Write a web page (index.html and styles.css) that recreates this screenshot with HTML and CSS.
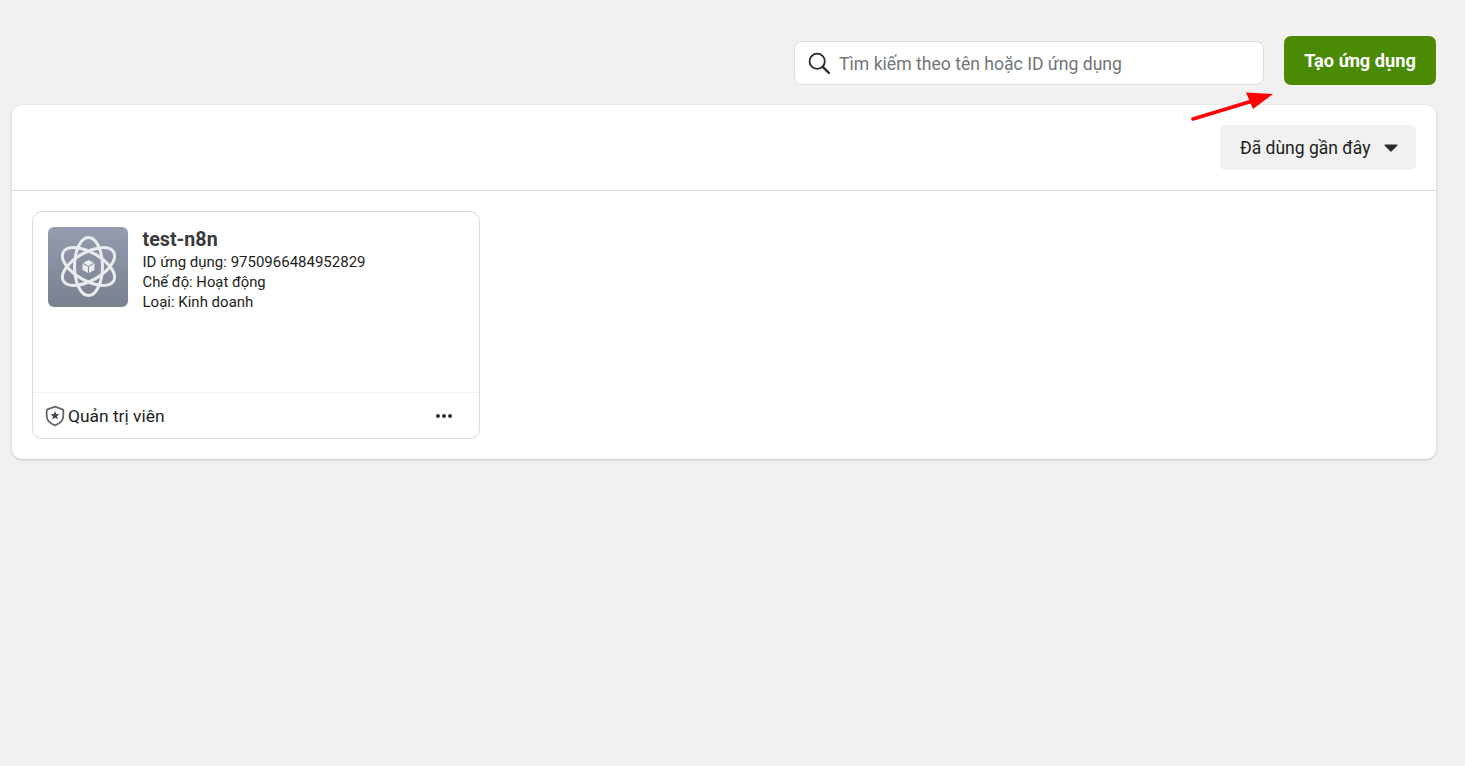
FILE: index.html
```html
<!DOCTYPE html>
<html lang="vi">
<head>
<meta charset="utf-8">
<title>Ứng dụng</title>
<link rel="stylesheet" href="styles.css">
</head>
<body>
<main class="page">
  <header class="topbar">
    <label class="search">
      <svg class="search-icon" viewBox="0 0 24 24" width="24" height="24" fill="none" stroke="#2a2a2a" stroke-width="1.8" stroke-linecap="round"><circle cx="10.2" cy="10.2" r="7.6"/><path d="M15.8 15.8 22 22" stroke-width="2.4"/></svg>
      <span class="placeholder">Tìm kiếm theo tên hoặc ID ứng dụng</span>
    </label>
    <button class="create">Tạo ứng dụng</button>
  </header>
  <section class="panel">
    <div class="toolbar">
      <button class="sort">Đã dùng gần đây<svg class="caret" viewBox="0 0 14 8" width="14" height="8"><path d="M1 .6h12a.6.6 0 0 1 .45 1L7.5 7.400a.7.7 0 0 1-1 0L.55 1.600A.6.6 0 0 1 1 .6z" fill="#2b2b2b"/></svg></button>
    </div>
    <div class="grid">
      <article class="card">
        <div class="card-body">
          <div class="app-icon">
            <svg viewBox="0 0 80 80" width="80" height="80" fill="none" stroke="#e9ebef" stroke-width="3">
              <ellipse cx="40.500" cy="39.500" rx="14" ry="29"/>
              <ellipse cx="40.500" cy="39.500" rx="14" ry="29" transform="rotate(60 40.500 39.500)"/>
              <ellipse cx="40.500" cy="39.500" rx="14" ry="29" transform="rotate(120 40.500 39.500)"/>
              <path d="M40.500 33l6 3.200v6.800l-6 3.300-6-3.300v-6.800z" fill="#e9ebef" stroke="none"/>
              <path d="M34.500 36.200l6 3.200 6-3.200M40.500 39.400v6.600" stroke="#828a9c" stroke-width="1"/>
            </svg>
          </div>
          <div class="info">
            <h2 class="name">test-n8n</h2>
            <p>ID ứng dụng: 9750966484952829</p>
            <p class="mode">Chế độ: Hoạt động</p>
            <p>Loại: Kinh doanh</p>
          </div>
        </div>
        <footer class="card-foot">
          <span class="role">
            <svg viewBox="0 0 20 22" width="20" height="22" fill="none"><path d="M10 1.600 17.600 4.400a1 1 0 0 1 .7 1V11c0 4.200-3.200 7.400-8.300 9.400C4.900 18.400 1.700 15.200 1.700 11V5.400a1 1 0 0 1 .7-1z" stroke="#606770" stroke-width="1.800"/><path d="m10 6.200 1.300 2.800 3 .3-2.250 2 .65 3-2.700-1.600-2.700 1.600.65-3-2.250-2 3-.3z" fill="#444950"/></svg>
            Quản trị viên
          </span>
          <span class="more"><i></i><i></i><i></i></span>
        </footer>
      </article>
    </div>
  </section>
  <svg class="arrow" viewBox="0 0 84 32" width="84" height="32"><path d="M2 29 68 9" stroke="#f00" stroke-width="3.600" stroke-linecap="round"/><path d="M82 4 55 2.500 62 19z" fill="#f00"/></svg>
</main>
</body>
</html>
```
FILE: styles.css
```css
* { box-sizing: border-box; }
html, body { margin: 0; height: 100%; }
body { background: #f1f1f1; font-family: Roboto, "Noto Sans", sans-serif; color: #1c1e21; overflow: hidden; }
.page { position: relative; padding: 36px 29px 0 12px; }
.topbar { display: flex; justify-content: flex-end; align-items: flex-end; gap: 20px; height: 49px; }
.search { width: 470px; height: 44px; display: flex; align-items: center; gap: 8px; padding: 0 12px; background: #fff; border: 1px solid #dadde1; border-radius: 8px; }
.search-icon { flex: none; }
.placeholder { font-size: 17.6px; color: #72757a; padding-top: 2px; }
.create { width: 152px; height: 49px; border: 0; border-radius: 7px; background: #4a8a05; color: #fff; font: 700 18.200px Roboto, sans-serif; padding: 0 0 1px; }
.panel { margin-top: 20px; height: 354px; background: #fff; border-radius: 10px; box-shadow: 0 1px 3px rgba(0, 0, 0, .2); }
.toolbar { height: 86px; display: flex; justify-content: flex-end; align-items: flex-start; padding: 20px 20px 0; border-bottom: 1px solid #dadde1; }
.sort { width: 196px; height: 45px; display: flex; align-items: center; justify-content: space-between; padding: 0 18px 0 20px; border: 0; border-radius: 6px; background: #f1f1f1; color: #1c1e21; font: 400 17.500px Roboto, sans-serif; }
.grid { padding: 20px; }
.card { width: 448px; height: 228px; display: flex; flex-direction: column; border: 1px solid #d6d8dc; border-radius: 10px; }
.card-body { flex: 1; display: flex; gap: 15px; padding: 15px 15px 0; }
.app-icon { width: 80px; height: 80px; border-radius: 6px; background: linear-gradient(#949caf, #79808f); flex: none; }
.app-icon svg { display: block; }
.info { font-size: 15px; line-height: 20px; color: #1c1e21; margin-left: -.500px; }
.info p { margin: 0; }
.info .mode { font-size: 14.800px; }
.name { margin: 1px 0 0; font-size: 19.700px; line-height: 24px; font-weight: 700; color: #3a3a3a; }
.card-foot { height: 46px; display: flex; align-items: center; justify-content: space-between; padding: 0 27px 0 12px; border-top: 1px solid #eef0f2; }
.role { display: flex; align-items: center; gap: 3px; font-size: 17.400px; }
.more { display: flex; gap: 2px; }
.more i { width: 4px; height: 4px; border-radius: 50%; background: #333; }
.arrow { position: absolute; left: 1191px; top: 90px; }
```
